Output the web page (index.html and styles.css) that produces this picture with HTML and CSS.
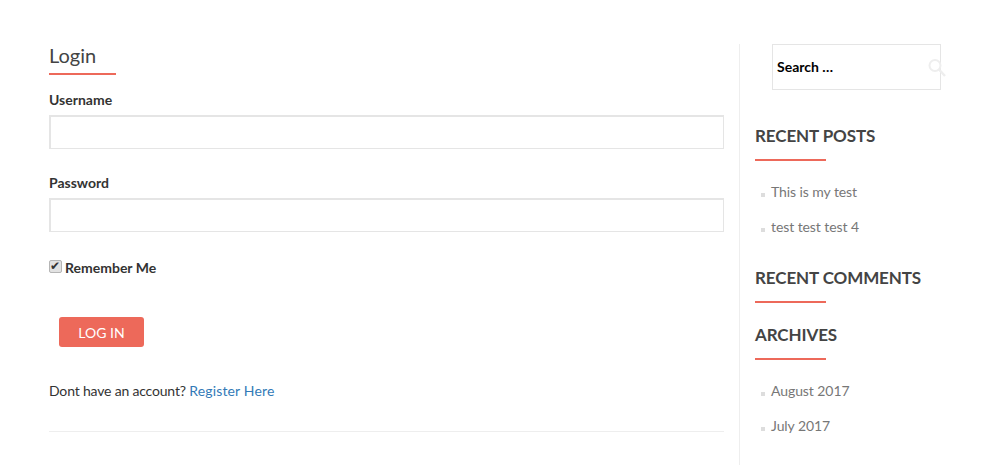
FILE: index.html
```html
<!DOCTYPE html>
<html lang="en">
<head>
    <meta charset="UTF-8">
    <meta name="viewport" content="width=device-width, initial-scale=1.0">
    <title>Login</title>
    <link rel="stylesheet" href="styles.css">
</head>
<body>
    <div class="page">
        <div class="content">
            <h1 class="page-title">Login</h1>
            <form class="login-form">
                <label class="field-label" for="username">Username</label>
                <input class="field" id="username" type="text">

                <label class="field-label" for="password">Password</label>
                <input class="field" id="password" type="password">

                <label class="remember">
                    <input type="checkbox" checked>
                    Remember Me
                </label>

                <button class="login-btn" type="button">LOG IN</button>

                <p class="register">Dont have an account? <a href="#">Register Here</a></p>
            </form>
            <hr class="divider">
        </div>

        <div class="sidebar">
            <div class="search-box">
                <span class="search-text">Search …</span>
                <svg class="search-icon" width="20" height="20" viewBox="0 0 20 20">
                    <circle cx="9" cy="7.5" r="5.5" fill="none" stroke="#eeeeee" stroke-width="2"></circle>
                    <line x1="13" y1="11.5" x2="19" y2="18" stroke="#eeeeee" stroke-width="2.5"></line>
                </svg>
            </div>

            <h2 class="widget-title first">RECENT POSTS</h2>
            <ul class="widget-list">
                <li><a href="#">This is my test</a></li>
                <li><a href="#">test test test 4</a></li>
            </ul>

            <h2 class="widget-title comments">RECENT COMMENTS</h2>

            <h2 class="widget-title archives">ARCHIVES</h2>
            <ul class="widget-list">
                <li><a href="#">August 2017</a></li>
                <li><a href="#">July 2017</a></li>
            </ul>
        </div>
    </div>
</body>
</html>
```

FILE: styles.css
```css
* {
    box-sizing: border-box;
}

html, body {
    margin: 0;
    height: 100%;
    overflow: hidden;
    background: #fff;
    font-family: Lato, "Open Sans", sans-serif;
    color: #333;
}

.page {
    display: flex;
    height: 100vh;
    padding: 44px 0 0 49px;
}

.content {
    width: 675px;
}

.page-title {
    position: relative;
    margin: 0;
    height: 31px;
    font-size: 20px;
    font-weight: 400;
    line-height: 22px;
    color: #444;
}

.page-title::after {
    content: "";
    position: absolute;
    left: 0;
    bottom: 0;
    width: 67px;
    height: 2px;
    background: #ed695a;
}

.login-form {
    display: flex;
    flex-direction: column;
    align-items: flex-start;
}

.field-label {
    margin-top: 16px;
    font-size: 14px;
    font-weight: 700;
    line-height: 18px;
}

.field {
    width: 100%;
    height: 34px;
    margin: 6px 0 9px;
    border: 1px solid #e5e5e5;
    border-top-width: 2px;
    border-left-width: 2px;
    background: #fff;
}

.remember {
    display: flex;
    align-items: center;
    margin-top: 18px;
    font-size: 14px;
    font-weight: 700;
    line-height: 18px;
}

.remember input {
    position: relative;
    width: 13px;
    height: 13px;
    margin: 0 3px 4px 0;
    appearance: none;
    border: 1px solid #b5b5b5;
    border-radius: 2px;
    background: #e2e2e2;
}

.remember input::before {
    content: "✔";
    position: absolute;
    left: 0;
    top: -1px;
    font-family: "DejaVu Sans", sans-serif;
    font-size: 12px;
    line-height: 12px;
    color: #333;
}

.login-btn {
    width: 85px;
    height: 30px;
    margin: 40px 0 0 10px;
    padding: 0;
    border: 0;
    border-radius: 3px;
    background: #ed695a;
    color: #fff;
    font-family: inherit;
    font-size: 14px;
}

.register {
    margin: 35px 0 0;
    font-size: 14px;
    line-height: 18px;
    letter-spacing: -0.18px;
}

.register a {
    color: #337ab7;
    text-decoration: none;
    letter-spacing: 0.15px;
}

.divider {
    margin: 31px 0 0;
    border: 0;
    border-top: 1px solid #eee;
}

.sidebar {
    width: 200px;
    margin-left: 15px;
    padding-left: 15px;
    border-left: 1px solid #eee;
}

.search-box {
    position: relative;
    display: flex;
    align-items: center;
    width: 169px;
    height: 46px;
    margin-left: 17px;
    padding: 0 0 2px 4px;
    border: 1px solid #e5e5e5;
}

.search-text {
    font-size: 14px;
    font-weight: 700;
    color: #000;
}

.search-icon {
    position: absolute;
    right: -6px;
    top: 13px;
}

.widget-title {
    position: relative;
    margin: 0;
    height: 36px;
    font-size: 17px;
    font-weight: 700;
    line-height: 22px;
    letter-spacing: -0.1px;
    color: #444;
}

.widget-title::after {
    content: "";
    position: absolute;
    left: 0;
    bottom: 0;
    width: 71px;
    height: 2px;
    background: #ed695a;
}

.widget-title.first {
    margin-top: 35px;
}

.widget-title.comments {
    margin-top: 23px;
}

.widget-title.archives {
    margin-top: 21px;
}

.widget-list {
    margin: 13px 0 0;
    padding: 0 0 0 16px;
    list-style: none;
}

.widget-list li {
    position: relative;
    height: 35px;
    font-size: 14px;
    line-height: 35px;
    letter-spacing: -0.08px;
}

.widget-list li::before {
    content: "";
    position: absolute;
    left: -10px;
    top: 19px;
    width: 4px;
    height: 4px;
    background: #ddd;
}

.widget-list a {
    color: #777;
    text-decoration: none;
}
```
